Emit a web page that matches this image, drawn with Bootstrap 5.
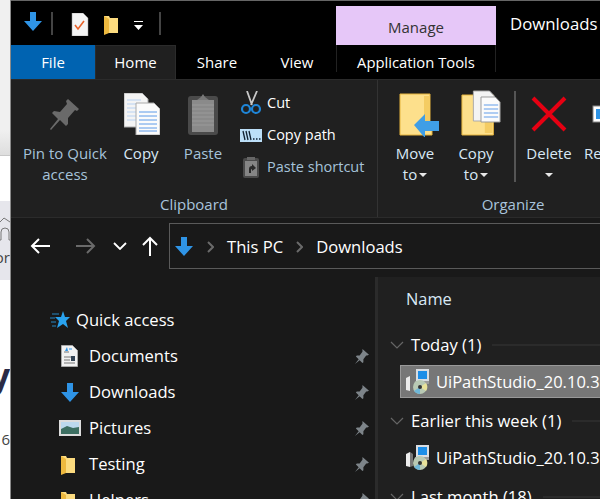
<!DOCTYPE html>
<html lang="en">
<head>
    <meta charset="UTF-8">
    <meta name="viewport" content="width=device-width, initial-scale=1.0">
    <title>Downloads</title>
    <link rel="stylesheet" href="https://cdn.jsdelivr.net/npm/bootstrap@5.3.0/dist/css/bootstrap.min.css">
    <style>
        html, body { height: 499px; overflow: hidden; }
        body { background: #fff; font-family: "Open Sans", "Noto Sans", sans-serif; font-size: 15px; color: #fff; line-height: 20px; }
        svg { display: block; flex: none; }

        .page-strip { width: 10px; height: 499px; flex: none; overflow: hidden; color: #444; }
        .strip-a { height: 156px; background: linear-gradient(#f0f0f0, #f0f0f0 130px, #dedede); border-bottom: 1px solid #c8c8c8; }
        .strip-b { height: 45px; background: #fff; }
        .strip-c { height: 79px; background: #e6e6ec; padding-top: 15px; }
        .strip-d { height: 219px; padding-top: 75px; }
        .strip-text { white-space: nowrap; direction: rtl; width: 10px; font-size: 15px; }
        .strip-c .strip-text { margin-top: 5px; }
        .strip-big { font-size: 34px; line-height: 40px; font-weight: 700; color: #2b2b45; }
        .strip-num { margin-top: 34px; }

        .win { width: 590px; height: 499px; flex: none; background: #191919; border-left: 1px solid #8a8a8a; overflow: hidden; }
        .title-bar { height: 45px; background: #000; border-top: 1px solid #666; }
        .qat-sep { width: 2px; height: 23px; background: #444; margin-top: 11px; }
        .manage { width: 160px; height: 39px; margin-top: 5px; background: #e6c7f8; color: #333; text-align: center; line-height: 42px; }
        .win-title { margin-left: 14px; margin-top: 13px; font-size: 16.8px; white-space: nowrap; }

        .tab-row { height: 34px; background: #000; }
        .rb-tab { text-align: center; line-height: 34px; white-space: nowrap; }
        .tab-file { width: 84px; background: #0063b1; }
        .tab-home { width: 81px; background: #202020; border: 1px solid #2b2b2b; border-bottom: 0; line-height: 32px; }
        .tab-share { width: 82px; }
        .tab-view { width: 78px; }
        .tab-tools { width: 160px; border-left: 1px solid #222; border-right: 1px solid #222; height: 27px; line-height: 34px; font-size: 14.8px; }

        .ribbon { height: 139px; background: #202020; border-top: 1px solid #2b2b2b; border-bottom: 1px solid #2b2b2b; }
        .rb-group { height: 137px; }
        .group-clip { width: 367px; border-right: 1px solid #333; }
        .group-org { width: 222px; }
        .rb-items { height: 114px; }
        .rb-label { text-align: center; color: #a9c4dc; height: 23px; font-size: 15px; }
        .big-btn { flex: none; text-align: center; font-size: 15px; line-height: 21px; padding-top: 12px; color: #d8e8f5; }
        .big-btn svg { margin: 1px auto 8px; }
        .btn-text-dim { color: #a6c3da; }
        .btn-pin { width: 96px; margin-left: 6px; }
        .btn-pin svg { margin: 7px auto 12px; }
        .btn-copy { width: 60px; margin-left: -2px; }
        .btn-copy svg { margin: 1px 0 8px 13px; }
        .btn-paste { width: 60px; margin-left: 2px; }
        .small-list { margin-left: 7px; padding-top: 7px; }
        .small-row { height: 32px; line-height: 32px; font-size: 14.5px; white-space: nowrap; }
        .small-row svg { width: 22px; margin-right: 5px; }
        .btn-move { width: 60px; margin-left: 7px; }
        .btn-move svg { margin: 1px 0 6px 14px; }
        .btn-copyto { width: 62px; }
        .btn-copyto svg { margin: -2px 0 7px 16px; }
        .rb-sep { flex: none; width: 2px; height: 91px; background: #555; margin-top: 11px; margin-left: 7px; }
        .btn-delete { width: 64px; margin-left: 1px; }
        .btn-delete svg { margin: 4px auto 11px; }
        .btn-re { margin-left: 3px; white-space: nowrap; text-align: left; }
        .btn-re svg { margin: 13px 0 20px 8px; }
        .caret-w { display: inline-block; border-left: 4px solid transparent; border-right: 4px solid transparent; border-top: 4px solid #e8e8e8; vertical-align: 3px; margin-left: 2px; }

        .nav-row { height: 59px; padding-top: 5px; }
        .nav-btn-wrap { width: 158px; height: 46px; }
        .addr { height: 46px; flex: 1; border: 1px solid #5a5a5a; border-right: 0; font-size: 16.6px; white-space: nowrap; margin-right: -20px; padding-top: 1px; }

        .content { height: 222px; }
        .side { width: 364px; flex: none; padding-top: 25px; }
        .side-head { padding-left: 39px; height: 36px; font-size: 16.6px; }
        .side-head svg { margin-right: 6px; }
        .side-item { padding-left: 50px; padding-right: 6px; height: 36px; font-size: 16.6px; }
        .side-icon { width: 24px; margin-right: 4px; }
        .main-pane { flex: 1; background: #202020; border-left: 3px solid #2b2b2b; height: 222px; overflow: hidden; }
        .col-name { padding: 12px 0 0 28px; height: 50px; font-size: 16.4px; color: #d8e8f5; }
        .grp-row { height: 36px; padding-left: 12px; font-size: 16.6px; white-space: nowrap; }
        .grp-row svg { margin-right: 7px; }
        .grp-line { flex: 1; height: 2px; background: #2b2b2b; margin-left: 11px; }
        .file-row { height: 33px; margin-top: 2px; margin-left: 22px; padding-left: 6px; font-size: 16.5px; white-space: nowrap; overflow: hidden; }
        .file-sel { background: #777; border: 1px solid #999; border-right: 0; padding-left: 5px; }
        .file-row svg { margin-right: 6px; }
        .grp-gap { margin-top: 5px; }
    </style>
</head>
<body class="d-flex">
    <svg width="0" height="0" class="position-absolute">
        <defs>
            <symbol id="blue-down" viewBox="0 0 18 19"><path d="M6 0h6v9h6l-9 10L0 9h6z" fill="#2f94e6"/></symbol>
            <symbol id="pin-s" viewBox="0 0 16 16"><path d="M9 0l7 6-2 1-1 0-3 4 0 3-1 1-3-3-5 4 4-5-3-3 1-1 3 0 3-4 0-2z" fill="#7d8489"/></symbol>
            <symbol id="folder-s" viewBox="0 0 15 21"><path d="M0 2h5l1 2h8v15H0z" fill="#fcdb7f"/><path d="M0 2l5 3v14l-5 2z" fill="#eeb93f"/></symbol>
            <symbol id="msi" viewBox="0 0 24 25">
                <rect x="10" y="0" width="13" height="12" fill="#d9dde2"/><rect x="12" y="2" width="9" height="8" fill="#1c8ee8"/><path d="M9 12h14v3H8z" fill="#9a9a9a"/>
                <path d="M0 9l4-2v15l-4-1z" fill="#ececec"/><path d="M4 7l3 2v12l-3 1z" fill="#777"/>
                <circle cx="14" cy="18" r="7" fill="#b8c9b4"/><path d="M14 18l6-4a7 7 0 0 1 0 8z" fill="#e8e29a"/><path d="M14 18l-6 4a7 7 0 0 0 6 3z" fill="#6fb7d8"/><circle cx="14" cy="18" r="2" fill="#333"/>
            </symbol>
        </defs>
    </svg>

    <div class="page-strip">
        <div class="strip-a"></div>
        <div class="strip-b"></div>
        <div class="strip-c">
            <svg width="10" height="26" viewBox="0 0 10 26"><path d="M0 6l4-4 6 4M0 24h1V16q0-4 4-4t4 4v8h1" fill="none" stroke="#777" stroke-width="1"/></svg>
            <div class="strip-text">or</div>
        </div>
        <div class="strip-d">
            <div class="strip-text strip-big">y</div>
            <div class="strip-text strip-num">6</div>
        </div>
    </div>

    <div class="win d-flex flex-column">
        <div class="title-bar d-flex">
            <svg width="18" height="19" style="margin:11px 0 0 13px"><use href="#blue-down"/></svg>
            <div class="qat-sep" style="margin-left:9px"></div>
            <svg width="18" height="23" viewBox="0 0 18 23" style="margin:12px 0 0 18px"><path d="M1 0h11l5 5v18H1z" fill="#f4f4f4" stroke="#999" stroke-width=".5"/><path d="M4 12l3 4 6-8" fill="none" stroke="#e8622a" stroke-width="1.6"/></svg>
            <svg width="15" height="21" style="margin:13px 0 0 15px"><use href="#folder-s"/></svg>
            <svg width="10" height="10" viewBox="0 0 10 10" style="margin:20px 0 0 15px"><path d="M0 0h9v1H0zM0 4h9L4.500 9z" fill="#fff"/></svg>
            <div class="qat-sep" style="margin-left:15px"></div>
            <div style="width:175px"></div>
            <div class="manage">Manage</div>
            <div class="win-title">Downloads</div>
        </div>

        <div class="tab-row d-flex">
            <div class="rb-tab tab-file">File</div>
            <div class="rb-tab tab-home">Home</div>
            <div class="rb-tab tab-share">Share</div>
            <div class="rb-tab tab-view">View</div>
            <div class="rb-tab tab-tools">Application Tools</div>
        </div>

        <div class="ribbon d-flex">
            <div class="rb-group group-clip">
                <div class="rb-items d-flex">
                    <div class="big-btn btn-pin btn-text-dim">
                        <svg width="32" height="32" viewBox="0 0 32 32"><path d="M19 0l11 10-2 2-2-1-7 8 0 6-2 2-6-6-9 10-1-1 8-10-6-6 2-2 6 1 7-8-1-3z" fill="#6a6a6a"/></svg>
                        Pin to Quick<br>access
                    </div>
                    <div class="big-btn btn-copy">
                        <svg width="36" height="42" viewBox="0 0 36 42"><path d="M0 0h18l6 6v28H0z" fill="#f4f4f4" stroke="#aaa"/><path d="M3 7h14M3 11h18M3 15h18M3 19h18M3 23h18M3 27h18" stroke="#b8d2f2"/><path d="M12 10h18l6 6v26H12z" fill="#fbfbfb" stroke="#aaa"/><path d="M15 19h18M15 23h18M15 27h18M15 31h18M15 35h18M15 38h18" stroke="#5d9ae8"/></svg>
                        Copy
                    </div>
                    <div class="big-btn btn-paste btn-text-dim">
                        <svg width="32" height="42" viewBox="0 0 32 42"><rect x="1" y="3" width="30" height="39" rx="3" fill="#4a4a4a"/><rect x="5" y="7" width="22" height="32" fill="#8a8a8a"/><path d="M5 12h22M5 16h22M5 20h22M5 24h22M5 28h22M5 32h22" stroke="#9a9a9a"/><path d="M10 7l4-3 2-3 2 3 4 3z" fill="#777"/></svg>
                        Paste
                    </div>
                    <div class="small-list">
                        <div class="small-row d-flex align-items-center">
                            <svg height="24" viewBox="0 0 22 24"><path d="M7 0l5 14M17 0l-6 14" stroke="#c8c8c8" stroke-width="1.8"/><circle cx="6" cy="18" r="4" fill="none" stroke="#1f86d8" stroke-width="2.200"/><circle cx="16" cy="18" r="4" fill="none" stroke="#1f86d8" stroke-width="2.200"/></svg>
                            <span>Cut</span>
                        </div>
                        <div class="small-row d-flex align-items-center">
                            <svg height="13" viewBox="0 0 22 13"><rect width="22" height="13" fill="#bcdff8"/><path d="M3 2l2 9M6 2l2 9M9 2l2 9" stroke="#123" stroke-width="1.3"/><path d="M13 10h1.500M16 10h1.500M19 10h1.500" stroke="#123" stroke-width="1.300"/></svg>
                            <span>Copy path</span>
                        </div>
                        <div class="small-row d-flex align-items-center btn-text-dim">
                            <svg height="22" viewBox="0 0 22 22"><rect x="3" y="2" width="16" height="20" rx="2" fill="#4a4a4a"/><rect x="5" y="5" width="12" height="15" fill="#858585"/><path d="M7 1h8v3H7z" fill="#666"/><path d="M9 17v-4q0-3 3-3V8l4 4-4 3v-2q-1 0-1 1v3z" fill="#2a2a2a"/></svg>
                            <span>Paste shortcut</span>
                        </div>
                    </div>
                </div>
                <div class="rb-label">Clipboard</div>
            </div>

            <div class="rb-group group-org">
                <div class="rb-items d-flex">
                    <div class="big-btn btn-move">
                        <svg width="40" height="44" viewBox="0 0 40 44"><path d="M1 1h30v35h2v6H1z" fill="#fde08c" stroke="#e6b43c"/><path d="M25 3h6v30h-6z" fill="#f4cc63"/><path d="M15 32L26 21v7h14v10H26v7z" fill="#3f9ee6"/></svg>
                        Move<br>to<span class="caret-w"></span>
                    </div>
                    <div class="big-btn btn-copyto">
                        <svg width="40" height="46" viewBox="0 0 42 46" preserveAspectRatio="none"><path d="M1 5h33v40H1z" fill="#fde08c" stroke="#e6b43c"/><path d="M25 7h8v36h-8z" fill="#f4cc63"/><path d="M13 1h17l5 5v25H13z" fill="#f4f4f4" stroke="#aaa"/><path d="M21 7h15l5 5v20H21z" fill="#fbfbfb" stroke="#999"/><path d="M24 15h15M24 19h15M24 23h15M24 27h15" stroke="#5d9ae8"/></svg>
                        Copy<br>to<span class="caret-w"></span>
                    </div>
                    <div class="rb-sep"></div>
                    <div class="big-btn btn-delete">
                        <svg width="36" height="36" viewBox="0 0 36 36"><path d="M2 2l32 32M34 2L2 34" stroke="#e60012" stroke-width="4"/></svg>
                        Delete<br><span class="caret-w m-0"></span>
                    </div>
                    <div class="big-btn btn-re">
                        <svg width="24" height="18" viewBox="0 0 24 18"><rect x="1" y="1" width="23" height="16" fill="#fff" stroke="#888"/><rect x="4" y="4" width="20" height="10" fill="#2f94e6"/></svg>
                        Re
                    </div>
                </div>
                <div class="rb-label" style="padding-left:48px">Organize</div>
            </div>
        </div>

        <div class="nav-row d-flex">
            <div class="nav-btn-wrap d-flex align-items-center">
                <svg width="20" height="16" viewBox="0 0 20 16" style="margin-left:19px"><path d="M20 8H2M9 1L2 8l7 7" fill="none" stroke="#fff" stroke-width="2"/></svg>
                <svg width="20" height="16" viewBox="0 0 20 16" style="margin-left:26px"><path d="M0 8h18M11 1l7 7-7 7" fill="none" stroke="#6a6a6a" stroke-width="2"/></svg>
                <svg width="14" height="8" viewBox="0 0 14 8" style="margin-left:17px"><path d="M1 1l6 6 6-6" fill="none" stroke="#fff" stroke-width="1.800"/></svg>
                <svg width="16" height="20" viewBox="0 0 16 20" style="margin-left:15px"><path d="M8 20V2M1 9l7-7 7 7" fill="none" stroke="#fff" stroke-width="2"/></svg>
            </div>
            <div class="addr d-flex align-items-center">
                <svg width="18" height="19" style="margin-left:5px"><use href="#blue-down"/></svg>
                <svg width="7" height="12" viewBox="0 0 7 12" style="margin:0 13px 0 14px"><path d="M1 1l5 5-5 5" fill="none" stroke="#6a6a6a" stroke-width="2"/></svg>
                <span>This PC</span>
                <svg width="7" height="12" viewBox="0 0 7 12" style="margin:0 13px"><path d="M1 1l5 5-5 5" fill="none" stroke="#6a6a6a" stroke-width="2"/></svg>
                <span>Downloads</span>
            </div>
        </div>

        <div class="content d-flex">
            <div class="side">
                <div class="side-head d-flex align-items-center">
                    <svg width="20" height="18" viewBox="0 0 20 18"><path d="M13 0l2 6h5l-4 4 2 7-5-4-6 4 2-7-4-4h6z" fill="#29a3f0"/><path d="M2 3h7M0 7h5M1 11h5M2 15h4" stroke="#29a3f0" stroke-width=".8"/></svg>
                    Quick access
                </div>
                <div class="side-item d-flex align-items-center">
                    <div class="side-icon"><svg width="17" height="22" viewBox="0 0 17 22"><path d="M.5.500h11l5 5v16H.500z" fill="#f2f2f2" stroke="#aaa"/><path d="M3 7h5M3 12h11M3 15h6M3 18h11" stroke="#777"/><path d="M4 6l2-4 1 4z" fill="#2f94e6"/><path d="M8 4h3" stroke="#2f94e6"/><rect x="10" y="11" width="4" height="5" fill="#345"/></svg></div>
                    <span class="flex-grow-1">Documents</span>
                    <svg width="15" height="15"><use href="#pin-s"/></svg>
                </div>
                <div class="side-item d-flex align-items-center">
                    <div class="side-icon"><svg width="18" height="19"><use href="#blue-down"/></svg></div>
                    <span class="flex-grow-1">Downloads</span>
                    <svg width="15" height="15"><use href="#pin-s"/></svg>
                </div>
                <div class="side-item d-flex align-items-center">
                    <div class="side-icon"><svg width="22" height="16" viewBox="0 0 22 16" style="margin-left:-2px"><rect width="22" height="16" fill="#ddd"/><rect x="2" y="2" width="18" height="12" fill="#bcd9ee"/><path d="M2 9l6-3 6 2 6-1v7H2z" fill="#3d6f62"/></svg></div>
                    <span class="flex-grow-1">Pictures</span>
                    <svg width="15" height="15"><use href="#pin-s"/></svg>
                </div>
                <div class="side-item d-flex align-items-center">
                    <div class="side-icon"><svg width="15" height="21"><use href="#folder-s"/></svg></div>
                    <span class="flex-grow-1">Testing</span>
                    <svg width="15" height="15"><use href="#pin-s"/></svg>
                </div>
                <div class="side-item d-flex align-items-center">
                    <div class="side-icon"><svg width="15" height="21"><use href="#folder-s"/></svg></div>
                    <span class="flex-grow-1">Helpers</span>
                    <svg width="15" height="15"><use href="#pin-s"/></svg>
                </div>
            </div>
            <div class="main-pane">
                <div class="col-name">Name</div>
                <div class="grp-row d-flex align-items-center">
                    <svg width="14" height="8" viewBox="0 0 14 8"><path d="M1 1l6 6 6-6" fill="none" stroke="#666" stroke-width="1.200"/></svg>
                    <span>Today (1)</span><span class="grp-line"></span>
                </div>
                <div class="file-row file-sel d-flex align-items-center">
                    <svg width="24" height="25"><use href="#msi"/></svg>
                    <span>UiPathStudio_20.10.3</span>
                </div>
                <div class="grp-row d-flex align-items-center grp-gap">
                    <svg width="14" height="8" viewBox="0 0 14 8"><path d="M1 1l6 6 6-6" fill="none" stroke="#666" stroke-width="1.200"/></svg>
                    <span>Earlier this week (1)</span><span class="grp-line"></span>
                </div>
                <div class="file-row d-flex align-items-center">
                    <svg width="24" height="25"><use href="#msi"/></svg>
                    <span>UiPathStudio_20.10.3</span>
                </div>
                <div class="grp-row d-flex align-items-center grp-gap">
                    <svg width="14" height="8" viewBox="0 0 14 8"><path d="M1 1l6 6 6-6" fill="none" stroke="#666" stroke-width="1.200"/></svg>
                    <span>Last month (18)</span><span class="grp-line"></span>
                </div>
            </div>
        </div>
    </div>

    <script src="https://cdn.jsdelivr.net/npm/bootstrap@5.3.0/dist/js/bootstrap.bundle.min.js"></script>
</body>
</html>
